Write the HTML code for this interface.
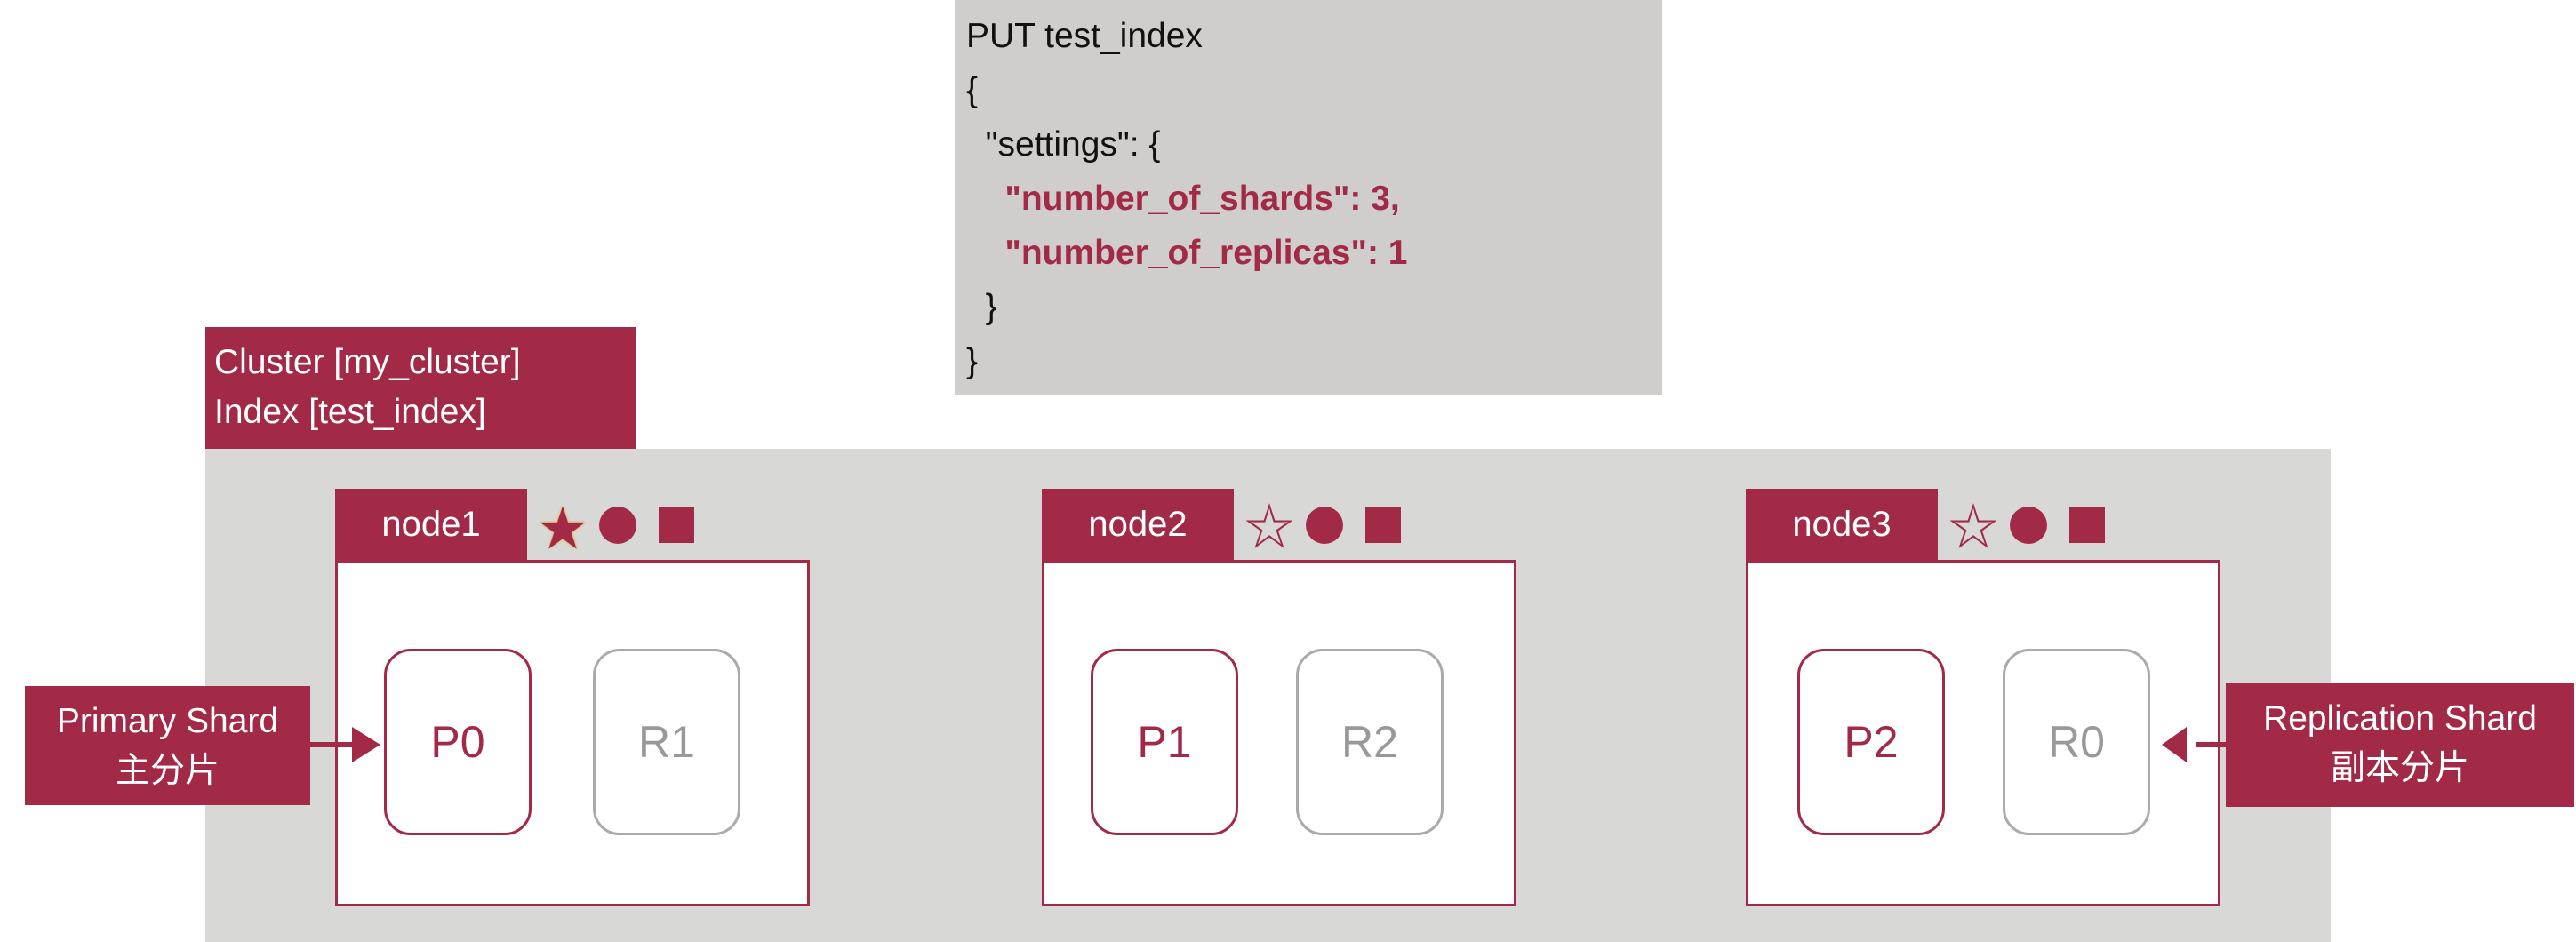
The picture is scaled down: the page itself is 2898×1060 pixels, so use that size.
<!DOCTYPE html>
<html><head><meta charset="utf-8"><style>
*{margin:0;padding:0;box-sizing:border-box}
body{width:2898px;height:1060px;background:#fff;position:relative;overflow:hidden;font-family:"Liberation Sans","Noto Sans CJK SC",sans-serif}
.a{position:absolute}
.red{background:#a32a46;color:#fff}
.code{left:1074px;top:0;width:796px;height:444px;background:#d0cecc;padding:10px 0 0 13px;font-size:39px;line-height:61px;color:#111;white-space:pre}
.code b{color:#a32a46}
.gray{left:231px;top:505px;width:2391px;height:555px;background:#d8d9d7}
.tab{height:80px;width:216px;font-size:40px;line-height:80px;text-align:center}
.box{width:534px;height:390px;background:#fff;border:3px solid #a32a46}
.sh{width:166px;height:210px;border:3px solid #a32a46;border-radius:30px;font-size:50px;line-height:204px;text-align:center;color:#a32a46;background:#fff}
.sh.r{border-color:#aaa;color:#999}
.lab{font-size:39px;line-height:56px;text-align:center;padding-top:12px}
</style></head><body>
<div class="a code">PUT test_index
{
  "settings": {
    <b>"number_of_shards": 3,</b>
    <b>"number_of_replicas": 1</b>
  }
}</div>
<div class="a red" style="left:231px;top:368px;width:484px;height:137px;font-size:39px;line-height:56px;padding:12px 0 0 10px">Cluster [my_cluster]<br>Index [test_index]</div>
<div class="a gray"></div>

<div class="a red tab" style="left:377px;top:550px">node1</div>
<div class="a box" style="left:377px;top:630px"></div>
<div class="a sh" style="left:432px;top:730px">P0</div>
<div class="a sh r" style="left:667px;top:730px">R1</div>
<div class="a" style="left:606px;top:551px;font-size:54px;color:#a32a46;text-shadow:0 0 3px #e8a020">★</div>

<div class="a red tab" style="left:1172px;top:550px">node2</div>
<div class="a box" style="left:1172px;top:630px"></div>
<div class="a sh" style="left:1227px;top:730px">P1</div>
<div class="a sh r" style="left:1458px;top:730px">R2</div>
<div class="a" style="left:1400px;top:549px;font-size:56px;color:#a32a46">☆</div>

<div class="a red tab" style="left:1964px;top:550px">node3</div>
<div class="a box" style="left:1964px;top:630px"></div>
<div class="a sh" style="left:2022px;top:730px">P2</div>
<div class="a sh r" style="left:2253px;top:730px">R0</div>
<div class="a" style="left:2192px;top:549px;font-size:56px;color:#a32a46">☆</div>

<svg class="a" style="left:0;top:0" width="2898" height="1060">
<g fill="#a32a46">
<circle cx="695" cy="591" r="21"/><rect x="741" y="571" width="40" height="40"/>
<circle cx="1490" cy="591" r="21"/><rect x="1536" y="571" width="40" height="40"/>
<circle cx="2282" cy="591" r="21"/><rect x="2328" y="571" width="40" height="40"/>
<rect x="349" y="835" width="50" height="6"/><polygon points="396,818 428,838 396,858"/>
<rect x="2470" y="835" width="36" height="6"/><polygon points="2432,838 2460,818 2460,858"/>
</g></svg>

<div class="a red lab" style="left:28px;top:772px;width:321px;height:134px">Primary Shard<br>主分片</div>
<div class="a red lab" style="left:2504px;top:769px;width:392px;height:139px">Replication Shard<br>副本分片</div>
</body></html>
